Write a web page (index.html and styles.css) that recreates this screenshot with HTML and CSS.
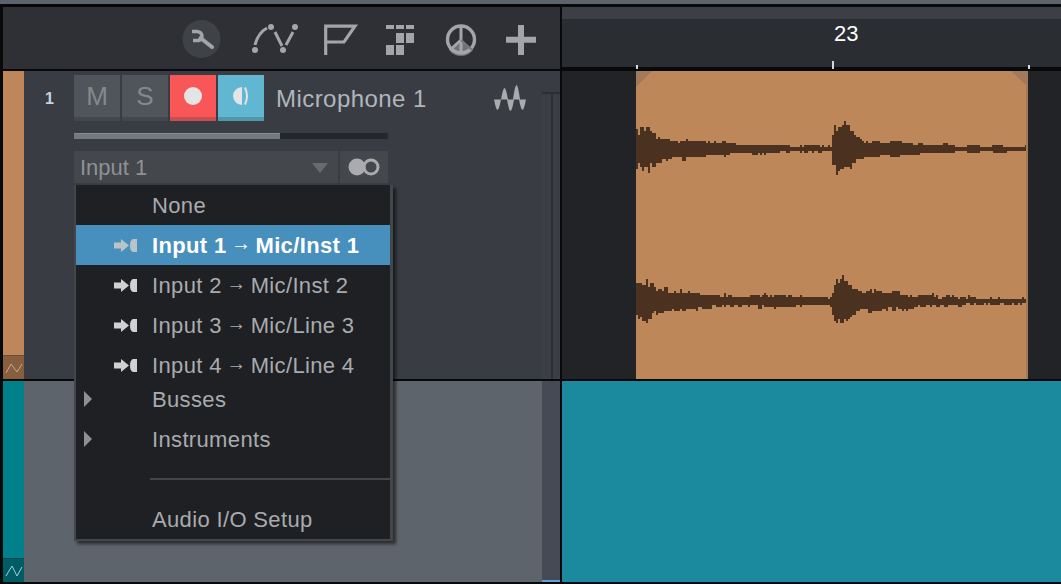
FILE: index.html
```html
<!DOCTYPE html>
<html lang="en">
<head>
<meta charset="utf-8">
<title>Microphone 1</title>
<link rel="stylesheet" href="styles.css">
</head>
<body>
<div class="app">
  <div class="top-strip"></div>
  <div class="workspace">
    <header class="toolbar">
      <svg width="53" height="40" viewBox="182 18 53 40"><circle cx="201.5" cy="39" r="19" fill="#3f4247"/><path d="M192 31.5H197Q202 32 202 36.5Q201.5 41 197 40.5H193" fill="none" stroke="#a3a5a8" stroke-width="3.4"/><path d="M200.5 38L212 47" stroke="#a3a5a8" stroke-width="4" stroke-linecap="round"/></svg>
      <svg width="76" height="40" viewBox="235 18 76 40"><g fill="#a3a5a8"><circle cx="255" cy="50" r="3"/><circle cx="271" cy="27" r="3"/><circle cx="283" cy="50" r="3"/><circle cx="295" cy="27" r="3"/></g><path d="M255 45Q258 33 267 28M275 32L282 46M286 45L293 32" fill="none" stroke="#a3a5a8" stroke-width="3"/></svg>
      <svg width="61" height="40" viewBox="311 18 61 40"><path d="M325.7 55V26.2H355L344 42H326" fill="none" stroke="#a3a5a8" stroke-width="3.2"/></svg>
      <svg width="58" height="40" viewBox="372 18 58 40"><g fill="#a3a5a8"><rect x="386" y="25" width="8" height="4"/><rect x="396" y="25" width="8" height="4"/><rect x="406" y="25" width="8" height="4"/><rect x="396" y="33" width="8" height="10"/><rect x="406" y="33" width="8" height="10"/><rect x="386" y="45" width="8" height="10"/><rect x="396" y="45" width="8" height="10"/></g></svg>
      <svg width="61" height="40" viewBox="430 18 61 40"><path d="M461 40L449 50A15 15 0 0 0 473 50Z" fill="#6f7276"/><circle cx="461" cy="39.5" r="13.5" fill="none" stroke="#a3a5a8" stroke-width="3.4"/><path d="M461 26V53M461 40L450 50" fill="none" stroke="#a3a5a8" stroke-width="3"/><path d="M461 40L472 50" stroke="#77797c" stroke-width="2"/></svg>
      <svg width="59" height="40" viewBox="491 18 59 40"><path d="M506 39.7H536M521 25V55" stroke="#a3a5a8" stroke-width="6"/></svg>
    </header>
    <div class="ruler">
      <div class="ruler-band"></div>
      <div class="ruler-label">23</div>
      <i class="tick tick-a"></i><i class="tick tick-b"></i><i class="tick tick-c"></i>
    </div>

    <section class="track track-one">
      <div class="strip strip-orange"><div class="auto auto-orange"><svg width="18" height="12" viewBox="0 0 18 12"><path d="M1 11L6 2L12 10L17 2" fill="none" stroke="#c7a98f" stroke-width="1"/></svg></div></div>
      <div class="channel">
        <div class="number">1</div>
        <div class="controls">
          <div class="button-row">
            <div class="btn btn-plain">M</div>
            <div class="btn btn-plain">S</div>
            <div class="btn btn-rec"><svg width="20" height="20" viewBox="0 0 20 20"><circle cx="10" cy="10" r="9" fill="#e3e5e5"/></svg></div>
            <div class="btn btn-mon"><svg width="20" height="20" viewBox="0 0 20 20"><path d="M11 1A9 9 0 0 0 11 19Z" fill="#e3e5e5"/><path d="M14 1.5Q18 10 14 18.5" fill="none" stroke="#e3e5e5" stroke-width="2"/></svg></div>
            <div class="track-name">Microphone 1</div>
            <svg class="wave-icon" width="32" height="26" viewBox="494 85 32 26"><path d="M494 99.5Q496 110 497.5 110Q499 110 501 99.5ZM501 99.5Q503 88 504.5 88Q506 88 508 99.5ZM507 99.5Q509 111 510.5 111Q512 111 514 99.5ZM513 99.5Q515 85 516.5 85Q518 85 520 99.5ZM519 99.5Q521 110 522.5 110Q524 110 526 99.5Z" fill="#a9abad"/></svg>
          </div>
          <div class="meter"><div class="meter-fill"></div></div>
          <div class="select-row">
            <div class="select"><span>Input 1</span><i class="caret"></i></div>
            <div class="stereo"><svg width="32" height="18" viewBox="0 0 32 18"><circle cx="9" cy="9" r="8.5" fill="#a9abae"/><circle cx="23" cy="9" r="7" fill="none" stroke="#a9abae" stroke-width="3"/></svg></div>
          </div>
        </div>
        <div class="side-rail"><i class="rail-line"></i></div>
      </div>
    </section>
    <section class="arrange arrange-one">
      <svg width="392" height="308" viewBox="636 71 392 308">
        <rect x="636" y="71" width="392" height="308" fill="#bd8759"/>
        <rect x="1026" y="71" width="2" height="308" fill="#a47a56"/>
        <path d="M636 71H652L636 87Z M1011 71H1028V87Z" fill="#a07a5a"/>
        <path fill="#4a3120" d="M636 129H638V135H640V127H644V131H646V127H650V131H652V133H656V139H658V137H660V139H670V141H678V143H680V141H686V139H688V141H706V143H708V141H710V143H714V141H716V143H722V141H726V143H736V145H790V147H800V145H802V147H804V145H820V147H822V145H824V147H828V145H830V147H832V135H834V125H836V131H838V127H842V125H844V121H846V125H850V131H854V135H856V137H860V139H862V141H864V143H866V141H868V143H872V141H880V143H890V141H902V143H913V145H918V143H923V145H943V143H948V145H955V147H967V145H980V147H992V145H1003V147H1025V145H1026V151H1007V153H993V151H980V153H967V151H955V153H920V155H900V157H890V155H880V157H864V159H856V163H852V169H850V167H844V169H840V171H838V175H836V165H832V151H822V153H818V151H814V153H812V151H808V153H804V151H802V153H800V151H790V153H786V151H780V153H766V155H764V153H762V155H760V153H758V155H752V153H730V155H726V157H724V155H706V157H686V161H682V157H672V159H668V161H666V159H662V163H656V167H652V163H650V173H648V167H644V171H642V167H640V163H638V169H636Z"/>
        <path fill="#4a3120" d="M636 283H642V285H646V279H648V287H650V283H654V287H656V291H658V289H662V291H664V287H668V293H674V291H676V293H680V289H682V293H688V291H690V293H700V295H720V297H724V293H726V297H728V295H732V297H750V295H760V297H762V295H764V293H766V295H768V297H770V295H772V297H774V295H786V297H788V295H792V297H800V295H802V297H828V299H830V297H832V293H834V285H836V279H838V283H840V279H842V275H844V281H848V285H852V289H858V291H862V293H866V291H870V289H872V293H874V289H876V291H882V293H892V291H900V295H908V297H910V295H912V297H918V295H932V293H934V297H936V295H938V299H942V297H946V295H950V297H952V295H954V297H958V299H960V297H966V299H968V295H970V297H976V299H990V297H992V299H998V297H1000V299H1022V297H1024V299H1026V303H1022V305H1020V303H1018V305H1014V303H1012V305H1004V303H1000V305H990V303H988V305H986V303H984V305H976V303H974V305H970V303H966V305H962V307H958V305H948V307H944V305H940V307H936V305H932V307H930V305H926V307H920V305H918V307H914V309H908V311H906V309H904V311H902V309H898V307H896V311H892V307H888V311H886V309H882V311H872V313H868V309H860V311H856V315H852V317H850V319H848V321H846V319H844V323H840V319H838V323H836V321H834V315H832V307H830V305H802V307H800V305H796V307H776V309H774V307H764V305H762V309H758V305H750V307H748V305H742V307H738V305H734V307H730V305H726V307H724V305H722V307H716V305H712V309H702V307H698V311H696V309H686V311H682V309H680V311H674V309H672V311H664V313H658V315H656V311H654V313H652V319H648V323H646V321H642V317H640V319H638V315H636Z"/>
      </svg>
    </section>

    <section class="track track-two">
      <div class="strip strip-teal"><div class="auto auto-teal"><svg width="18" height="14" viewBox="0 0 18 14"><path d="M1 12L7 2L12 12L17 3" fill="none" stroke="#9fd0d4" stroke-width="1"/></svg></div></div>
      <div class="channel-two">
        <div class="side-rail-two"><i class="rail-marker"></i></div>
      </div>
    </section>
    <section class="arrange arrange-two"></section>
  </div>

  <nav class="menu">
    <div class="row"><span class="ico"></span><span class="label">None</span></div>
    <div class="row row-active"><span class="ico ico-plug"><svg width="23" height="13" viewBox="0 0 23 13"><path d="M0 3.5H7V0L15 6.5L7 13V9.5H0Z" fill="#b9c4c9"/><path d="M23 0V13H19Q16 12 16 6.5Q16 1 19 0Z" fill="#b9c4c9"/></svg></span><span class="label">Input 1 <span class="arr">→</span> Mic/Inst 1</span></div>
    <div class="row"><span class="ico ico-plug"><svg width="23" height="13" viewBox="0 0 23 13"><path d="M0 3.5H7V0L15 6.5L7 13V9.5H0Z" fill="#d0d2d2"/><path d="M23 0V13H19Q16 12 16 6.5Q16 1 19 0Z" fill="#d0d2d2"/></svg></span><span class="label">Input 2 <span class="arr">→</span> Mic/Inst 2</span></div>
    <div class="row"><span class="ico ico-plug"><svg width="23" height="13" viewBox="0 0 23 13"><path d="M0 3.5H7V0L15 6.5L7 13V9.5H0Z" fill="#d0d2d2"/><path d="M23 0V13H19Q16 12 16 6.5Q16 1 19 0Z" fill="#d0d2d2"/></svg></span><span class="label">Input 3 <span class="arr">→</span> Mic/Line 3</span></div>
    <div class="row"><span class="ico ico-plug"><svg width="23" height="13" viewBox="0 0 23 13"><path d="M0 3.5H7V0L15 6.5L7 13V9.5H0Z" fill="#d0d2d2"/><path d="M23 0V13H19Q16 12 16 6.5Q16 1 19 0Z" fill="#d0d2d2"/></svg></span><span class="label">Input 4 <span class="arr">→</span> Mic/Line 4</span></div>
    <div class="row row-sub"><span class="ico ico-sub"><i class="tri"></i></span><span class="label">Busses</span></div>
    <div class="row"><span class="ico ico-sub"><i class="tri"></i></span><span class="label">Instruments</span></div>
    <div class="sep"></div>
    <div class="row"><span class="ico"></span><span class="label">Audio I/O Setup</span></div>
  </nav>
</div>
</body>
</html>
```

FILE: styles.css
```css
* { box-sizing: border-box; }
html, body { margin: 0; padding: 0; }
body { width: 1061px; height: 584px; overflow: hidden; background: #000; font-family: "Liberation Sans", Arial, sans-serif; }
.app { position: relative; width: 1061px; height: 584px; background: #08090a; }
.top-strip { height: 4px; background: #5c636b; margin-bottom: 3px; }
.workspace { display: grid; grid-template-columns: 557px 499px; grid-template-rows: 62px 308px 201px; gap: 2px; margin-left: 3px; }

.toolbar { display: flex; align-items: center; padding-left: 179px; background: #2e3035; }
.toolbar svg { display: block; flex: none; }

.ruler { position: relative; height: 60px; background: #2a2d32; }
.ruler-band { height: 12px; background: #3c3f45; }
.ruler-label { margin-left: 272px; padding-top: 3px; font-size: 22px; line-height: 24px; color: #fff; }
.tick { position: absolute; bottom: -2px; width: 2px; height: 4px; background: #d5d7d8; }
.tick-a { left: 74px; }
.tick-b { left: 270px; height: 8px; }
.tick-c { left: 466px; }

.track { display: flex; }
.strip { width: 21px; flex: none; display: flex; flex-direction: column; justify-content: flex-end; }
.strip-orange { background: #bd8759; }
.strip-teal { background: #00808a; }
.auto { display: flex; align-items: center; justify-content: center; height: 24px; }
.auto-orange { background: #875f3f; border-top: 1px solid #6e4e35; }
.auto-teal { background: #005d66; border-top: 1px solid #024a52; }

.channel { flex: 1; display: flex; background: #393d43; }
.number { width: 50px; padding: 19px 0 0 21px; font-size: 16px; line-height: 18px; font-weight: 700; color: #c4d5e2; }
.controls { width: 468px; padding-top: 4px; }
.button-row { display: flex; align-items: flex-start; gap: 2px; height: 46px; }
.btn { width: 46px; height: 46px; display: flex; align-items: center; justify-content: center; padding-bottom: 4px; font-size: 26px; line-height: 1; }
.btn-plain { background: #50555c; color: #85888c; border-bottom: 4px solid #43474d; padding-bottom: 0; }
.btn-rec { background: #f95757; border-bottom: 4px solid #c84f50; padding-bottom: 0; }
.btn-mon { background: #61b7d1; border-bottom: 4px solid #4f97ab; padding-bottom: 0; }
.track-name { width: 216px; margin-left: 10px; padding-top: 10px; font-size: 24px; line-height: 28px; letter-spacing: 0.45px; color: #b0b6bc; white-space: nowrap; }
.wave-icon { margin-top: 10px; }
.meter { width: 314px; height: 6px; margin-top: 12px; background: #24272b; }
.meter-fill { width: 206px; height: 6px; background: #747981; border-top: 1px solid #868a91; }
.select-row { display: flex; gap: 2px; margin-top: 12px; width: 314px; }
.select { width: 264px; height: 32px; padding: 2px 10px 0 6px; display: flex; align-items: center; justify-content: space-between; background: #44474c; font-size: 22px; color: #8f9295; }
.caret { width: 0; height: 0; border-left: 8px solid transparent; border-right: 8px solid transparent; border-top: 10px solid #686b6f; }
.stereo { width: 48px; height: 32px; display: flex; align-items: center; justify-content: center; background: #44474c; }
.stereo svg { display: block; }
.side-rail { position: relative; width: 18px; margin-top: 21px; border-top: 2px solid #2b2e33; background: #3b3f45; }
.rail-line { display: block; width: 2px; height: 100%; margin-left: 9px; background: #2b2e33; }

.arrange { background: #212326; }
.arrange-one { padding-left: 74px; }
.arrange-one svg { display: block; }
.arrange-two { background: #1b8a9f; }

.channel-two { flex: 1; display: flex; justify-content: flex-end; background: #5e646c; }
.side-rail-two { position: relative; width: 18px; background: #454a55; }
.rail-marker { position: absolute; left: 0; right: 0; bottom: 0; height: 2px; background: #5ea3de; }

.menu { position: absolute; left: 74px; top: 185px; width: 319px; height: 356px; background: #1e2024; border: 2px solid #43464b; border-top: 0; border-right-width: 3px; box-shadow: 3px 3px 3px rgba(0, 0, 0, 0.55); font-size: 22px; color: #a9abae; }
.row { display: flex; align-items: center; height: 40px; white-space: nowrap; letter-spacing: 0.35px; }
.label { padding-top: 2px; }
.row-active { background: #4790bd; color: #fff; font-weight: 700; }
.row-sub { margin-top: -6px; }
.ico { width: 76px; flex: none; display: flex; align-items: center; }
.ico svg { display: block; }
.ico-plug { padding-left: 38px; }
.ico-sub { padding-left: 8px; }
.tri { width: 0; height: 0; border-top: 8px solid transparent; border-bottom: 8px solid transparent; border-left: 8px solid #8e9094; }
.sep { height: 2px; margin: 19px 0 19px 74px; background: #43464b; }
.arr { font-size: 20px; font-weight: 400; letter-spacing: 0; margin: 0 -2px; position: relative; top: -3px; }
```
